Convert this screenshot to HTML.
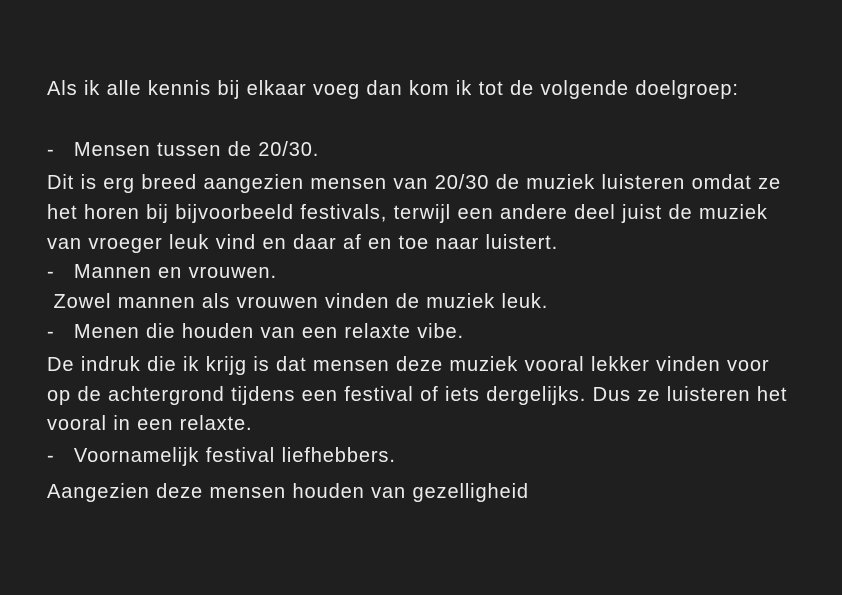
<!DOCTYPE html>
<html><head><meta charset="utf-8"><style>
html,body{margin:0;padding:0;}
body{width:842px;height:595px;background:#1f1f1f;position:relative;overflow:hidden;
font-family:"Liberation Sans",sans-serif;color:#ececec;font-size:20px;}
div{position:absolute;left:47px;line-height:24px;white-space:pre;letter-spacing:0.9px;}
</style></head><body>
<div style="top:77px">Als ik alle kennis bij elkaar voeg dan kom ik tot de volgende doelgroep:</div>
<div style="top:138px">-   Mensen tussen de 20/30.</div>
<div style="top:171px">Dit is erg breed aangezien mensen van 20/30 de muziek luisteren omdat ze</div>
<div style="top:201px">het horen bij bijvoorbeeld festivals, terwijl een andere deel juist de muziek</div>
<div style="top:231px">van vroeger leuk vind en daar af en toe naar luistert.</div>
<div style="top:260px">-   Mannen en vrouwen.</div>
<div style="top:290px"> Zowel mannen als vrouwen vinden de muziek leuk.</div>
<div style="top:320px">-   Menen die houden van een relaxte vibe.</div>
<div style="top:353px">De indruk die ik krijg is dat mensen deze muziek vooral lekker vinden voor</div>
<div style="top:383px">op de achtergrond tijdens een festival of iets dergelijks. Dus ze luisteren het</div>
<div style="top:412px">vooral in een relaxte.</div>
<div style="top:444px">-   Voornamelijk festival liefhebbers.</div>
<div style="top:480px">Aangezien deze mensen houden van gezelligheid</div>
</body></html>
